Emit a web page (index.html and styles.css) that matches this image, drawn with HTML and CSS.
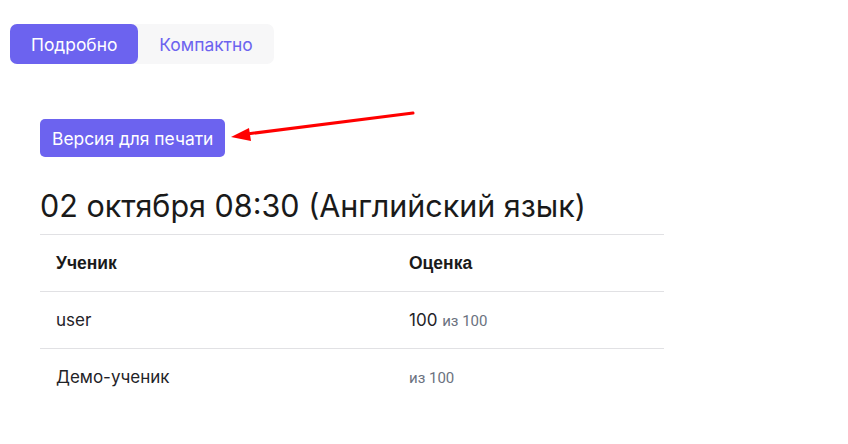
FILE: index.html
```html
<!DOCTYPE html>
<html lang="ru">
<head>
<meta charset="utf-8">
<link rel="stylesheet" href="styles.css">
</head>
<body>
<div class="page">
  <div class="tabs">
    <button class="tab active">Подробно</button>
    <button class="tab">Компактно</button>
  </div>
  <div class="content">
    <div class="print-row">
      <button class="print-btn">Версия для печати</button>
      <svg class="arrow" width="200" height="40" viewBox="0 0 200 40">
        <line x1="188" y1="3" x2="22" y2="24" stroke="#f00" stroke-width="3" stroke-linecap="round"/>
        <polygon points="6,27 24,18 26,31" fill="#f00"/>
      </svg>
    </div>
    <h1 class="title">02 октября 08:30 (Английский язык)</h1>
    <table class="grades">
      <thead>
        <tr><th class="col-name">Ученик</th><th>Оценка</th></tr>
      </thead>
      <tbody>
        <tr><td>user</td><td>100 <span class="max">из 100</span></td></tr>
        <tr><td>Демо-ученик</td><td><span class="max">из 100</span></td></tr>
      </tbody>
    </table>
  </div>
</div>
</body>
</html>
```
FILE: styles.css
```css
* { box-sizing: border-box; }
body {
  margin: 0;
  font-family: Inter, "Noto Sans", sans-serif;
  color: #1f2328;
  background: #fff;
}
.page { padding: 24px 10px; }
.tabs {
  display: inline-flex;
  background: #f7f7f8;
  border-radius: 7px;
}
.tab {
  font-family: inherit;
  font-size: 17.4px;
  border: 0;
  background: transparent;
  color: #6c63ef;
  height: 40px;
  padding: 0 21px;
  border-radius: 7px;
  cursor: pointer;
}
.tab.active {
  background: #6c63ef;
  color: #fff;
}
.content { padding: 0 30px; }
.print-row {
  margin-top: 55px;
  display: flex;
  align-items: flex-start;
  position: relative;
}
.print-btn {
  font-family: inherit;
  font-size: 17.4px;
  color: #fff;
  background: #6c63ef;
  border: 0;
  border-radius: 5px;
  height: 38px;
  padding: 0 12px;
}
.arrow {
  position: absolute;
  left: 185px;
  top: -9px;
}
.title {
  font-size: 30.5px;
  font-weight: 400;
  margin: 29px 0 0;
  line-height: 40px;
  color: #1a1a1a;
}
.grades {
  margin-top: 8px;
  width: 624px;
  border-collapse: collapse;
  font-size: 17px;
}
.grades th, .grades td {
  text-align: left;
  border-top: 1px solid #e1e1e4;
  height: 57px;
  padding: 0 16px;
}
.grades th {
  font-family: "Liberation Sans", Arial, sans-serif;
  font-weight: 700;
  font-size: 17.5px;
  color: #1a1a1a;
}
.col-name { width: 353px; }
.max {
  font-family: Roboto, sans-serif;
  font-size: 15px;
  color: #6b7280;
}
```
